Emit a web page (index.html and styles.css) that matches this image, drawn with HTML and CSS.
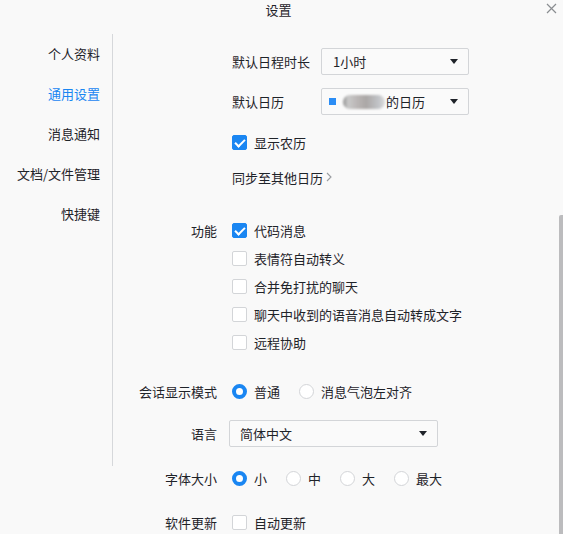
FILE: index.html
```html
<!DOCTYPE html>
<html lang="zh-CN">
<head>
    <meta charset="UTF-8">
    <title>设置</title>
    <link rel="stylesheet" href="styles.css">
</head>
<body class="page">
<div class="header">
    <div class="title">设置</div>
    <svg class="close" width="11" height="11" viewBox="0 0 11 11">
        <path d="M1 1L10 10M10 1L1 10" stroke="#8a8d91" stroke-width="1.2" fill="none"/>
    </svg>
</div>
<div class="body">
    <div class="side">
        <div class="nav">个人资料</div>
        <div class="nav active">通用设置</div>
        <div class="nav">消息通知</div>
        <div class="nav">文档/文件管理</div>
        <div class="nav">快捷键</div>
    </div>
    <div class="main">
        <div class="row r-first">
            <div class="lab"></div>
            <div class="ctl">
                <span class="inlab">默认日程时长</span>
                <div class="select sel-s"><span>1小时</span><i class="arrow"></i></div>
            </div>
        </div>
        <div class="row r-sel">
            <div class="lab"></div>
            <div class="ctl">
                <span class="inlab">默认日历</span>
                <div class="select sel-s">
                    <span class="cal"><b class="dot"></b><i class="blur"></i>的日历</span>
                    <i class="arrow"></i>
                </div>
            </div>
        </div>
        <div class="row r-chk">
            <div class="lab"></div>
            <div class="ctl"><span class="box on"></span><span>显示农历</span></div>
        </div>
        <div class="row r-sync">
            <div class="lab"></div>
            <div class="ctl">
                <span class="sync">同步至其他日历</span>
                <svg class="chev" width="6" height="10" viewBox="0 0 6 10"><path d="M1 1L5 5L1 9" stroke="#9a9da1" stroke-width="1.1" fill="none"/></svg>
            </div>
        </div>

        <div class="row r-func">
            <div class="lab">功能</div>
            <div class="ctl"><span class="box on"></span><span>代码消息</span></div>
        </div>
        <div class="row r-item">
            <div class="lab"></div>
            <div class="ctl"><span class="box"></span><span>表情符自动转义</span></div>
        </div>
        <div class="row r-item">
            <div class="lab"></div>
            <div class="ctl"><span class="box"></span><span>合并免打扰的聊天</span></div>
        </div>
        <div class="row r-item">
            <div class="lab"></div>
            <div class="ctl"><span class="box"></span><span>聊天中收到的语音消息自动转成文字</span></div>
        </div>
        <div class="row r-item">
            <div class="lab"></div>
            <div class="ctl"><span class="box"></span><span>远程协助</span></div>
        </div>

        <div class="row r-mode">
            <div class="lab">会话显示模式</div>
            <div class="ctl">
                <span class="opt"><span class="radio on"></span><span>普通</span></span>
                <span class="opt"><span class="radio"></span><span>消息气泡左对齐</span></span>
            </div>
        </div>
        <div class="row r-lang">
            <div class="lab">语言</div>
            <div class="ctl">
                <div class="select sel-l"><span>简体中文</span><i class="arrow"></i></div>
            </div>
        </div>
        <div class="row r-font">
            <div class="lab">字体大小</div>
            <div class="ctl">
                <span class="opt"><span class="radio on"></span><span>小</span></span>
                <span class="opt"><span class="radio"></span><span>中</span></span>
                <span class="opt"><span class="radio"></span><span>大</span></span>
                <span class="opt"><span class="radio"></span><span>最大</span></span>
            </div>
        </div>
        <div class="row r-upd">
            <div class="lab">软件更新</div>
            <div class="ctl"><span class="box"></span><span>自动更新</span></div>
        </div>
    </div>
</div>
<div class="scroll-thumb"></div>
</body>
</html>
```

FILE: styles.css
```css
html, body {
    margin: 0;
    height: 100%;
}

.page {
    background: #f9f9f9;
    color: #1f2329;
    font-family: "Noto Sans CJK SC", "Noto Sans", "Liberation Sans", sans-serif;
    font-size: 13px;
    overflow: hidden;
    position: relative;
}

.header {
    height: 34px;
    display: flex;
    justify-content: center;
    position: relative;
}

.title {
    line-height: 20px;
    padding-right: 6px;
    color: #1f2329;
}

.close {
    position: absolute;
    top: 3px;
    right: 6px;
}

.body {
    display: flex;
}

.side {
    width: 112px;
    height: 432px;
    border-right: 1px solid #d6d8db;
    box-sizing: content-box;
}

.nav {
    height: 40px;
    line-height: 40px;
    text-align: right;
    padding-right: 12px;
    white-space: nowrap;
}

.nav.active {
    color: #1a86f2;
}

.main {
    flex: 1;
    display: flex;
    flex-direction: column;
}

.row {
    display: flex;
    align-items: center;
    height: 20px;
}

.lab {
    width: 104px;
    flex: none;
    text-align: right;
    white-space: nowrap;
}

.ctl {
    display: flex;
    align-items: center;
    margin-left: 12px;
    white-space: nowrap;
}

.r-first { margin-top: 14px; height: 27px; }
.r-sel { margin-top: 13px; height: 27px; }
.r-chk { margin-top: 17px; }
.r-sync { margin-top: 15px; }
.r-func { margin-top: 29px; height: 28px; }
.r-item { height: 28px; }
.r-mode { margin-top: 25px; }
.r-lang { margin-top: 19px; height: 27px; }
.r-font { margin-top: 21px; }
.r-upd { margin-top: 24px; }

.inlab {
    width: 92px;
    padding-left: 3px;
    box-sizing: border-box;
}

.select {
    height: 27px;
    box-sizing: border-box;
    border: 1px solid #d3d5d8;
    border-radius: 2px;
    background: #fafafa;
    display: flex;
    align-items: center;
    justify-content: space-between;
    padding: 0 10px 0 11px;
}

.sel-s { width: 148px; }
.sel-l { width: 209px; padding-left: 10px; }

.arrow {
    width: 0;
    height: 0;
    border-left: 4px solid transparent;
    border-right: 4px solid transparent;
    border-top: 5px solid #1f2329;
}

.cal {
    display: flex;
    align-items: center;
    margin-left: -4px;
}

.dot {
    width: 7px;
    height: 7px;
    background: #2b8df5;
    margin-right: 7px;
}

.blur {
    width: 42px;
    height: 14px;
    margin-right: 1px;
    border-radius: 7px;
    background: linear-gradient(90deg, #8e8e8e 0, #c9c9c9 12%, #b9b5b4 35%, #aba7a6 55%, #c2c4c8 85%, #dcdcdc);
    filter: blur(1px);
}

.box {
    width: 15px;
    height: 15px;
    box-sizing: border-box;
    border: 1px solid #d3d5d8;
    border-radius: 2px;
    background: #fff;
    margin-left: 3px;
    margin-right: 7px;
    position: relative;
    flex: none;
}

.box.on {
    background: #1a86f2;
    border-color: #1a86f2;
}

.box.on::after {
    content: "";
    position: absolute;
    left: 4px;
    top: 1px;
    width: 4px;
    height: 8px;
    border-right: 2px solid #fff;
    border-bottom: 2px solid #fff;
    transform: rotate(45deg);
}

.sync {
    padding-left: 3px;
}

.chev {
    margin-left: 3px;
}

.opt {
    display: flex;
    align-items: center;
    margin-right: 19px;
}

.radio {
    width: 15px;
    height: 15px;
    box-sizing: border-box;
    border: 1px solid #d3d5d8;
    border-radius: 50%;
    background: #fff;
    margin-left: 3px;
    margin-right: 7px;
    flex: none;
}

.opt + .opt .radio {
    margin-left: 0;
}

.radio.on {
    border: 4px solid #1a86f2;
}

.scroll-thumb {
    position: absolute;
    right: 0;
    top: 215px;
    width: 4px;
    height: 330px;
    background: #bcbcbe;
    border-radius: 2px 0 0 0;
}
```
